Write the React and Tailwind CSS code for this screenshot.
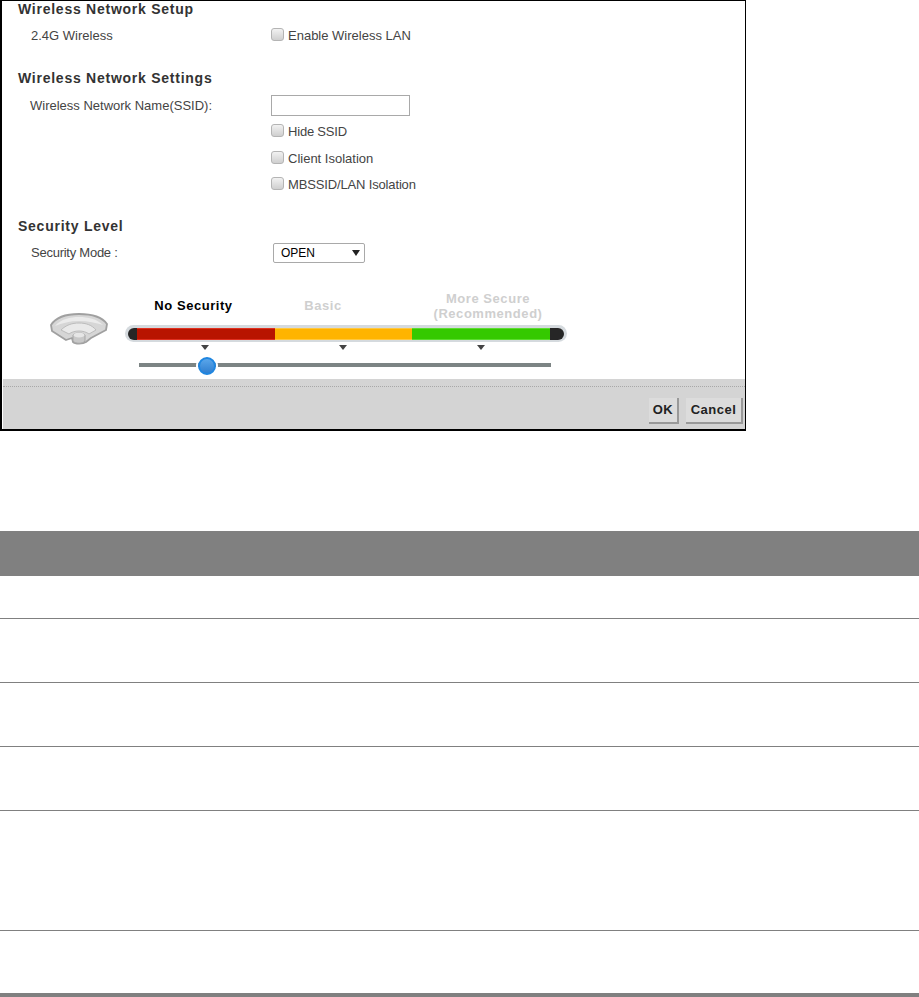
const font = "font-['Liberation_Sans',Arial,sans-serif]";

function Heading({ children, className = '' }) {
  return (
    <h2 className={`h-[18px] leading-[16px] text-[14px] font-bold tracking-[0.75px] text-[#333] ${className}`}>
      {children}
    </h2>
  );
}

function CheckRow({ label, className = '', labelClass = '' }) {
  return (
    <div className={`flex items-center h-[18px] ${className}`}>
      <span className="w-[13px] h-[13px] mt-[-3px] rounded-[3px] border border-[#b4b4b4] bg-gradient-to-b from-[#f2f2f2] to-[#cfcfcf]" />
      <span className={`ml-[4px] text-[13px] text-[#444] ${labelClass}`}>{label}</span>
    </div>
  );
}

function Arrow() {
  return <span className="w-0 h-0 border-x-[4px] border-x-transparent border-t-[5px] border-t-[#444]" />;
}

function WifiIcon() {
  return (
    <svg width="58" height="32" viewBox="0 0 58 32" className="block">
      <path d="M1 12 C6 4 17 1 29 1 C41 1 52 4 57 11 L56 17 L41 25 L36 29 C33 31 25 31 23 29 L22 25 L16 27 L2 18 Z" fill="#d6d6d6" stroke="#a0a0a0" strokeWidth="1.8" strokeLinejoin="round" />
      <path d="M5 13 C11 6 20 4 29 4 C38 4 47 6 53 12 C46 10 38 8 29 8 C20 8 12 10 5 13 Z" fill="#ebebeb" />
      <path d="M11 17 C16 12 22 10 29 10 C36 10 42 12 46 17 L39 21 C34 17 24 17 19 21 Z" fill="#e9e9e9" stroke="#bcbcbc" />
      <path d="M23 22 C26 19 32 19 35 22 L35 28 C33 31 25 31 23 28 Z" fill="#c8c8c8" stroke="#a6a6a6" />
      <ellipse cx="29" cy="22" rx="5.5" ry="2.5" fill="#e6e6e6" />
    </svg>
  );
}

function SecurityMeter() {
  return (
    <div className="flex">
      <div className="w-[75px] pl-[32px] pt-[25px] shrink-0 box-content">
        <WifiIcon />
      </div>
      <div className="w-[442px]">
        <div className="flex h-[37px] items-center pb-[2px] text-[13px] font-bold tracking-[0.55px] text-center leading-[15px]">
          <span className="w-[137px] shrink-0 text-black">No Security</span>
          <span className="w-[122px] shrink-0 text-[#cfcfcf]">Basic</span>
          <span className="w-[208px] shrink-0 text-[#cfcfcf]">More Secure<br />(Recommended)</span>
        </div>
        <div className="h-[17px] rounded-full bg-[#d5dade] p-[3px] pb-[2px]">
          <div className="flex h-[12px]">
            <div className="w-[9px] bg-[#262626] rounded-l-full" />
            <div className="w-[138px] bg-[#b81400] border-y border-[#e03020]" />
            <div className="w-[137px] bg-[#ffb400] border-y border-[#ffc840]" />
            <div className="w-[138px] bg-[#35c900] border-y border-[#5cdc30]" />
            <div className="w-[14px] bg-[#262626] rounded-r-full" />
          </div>
        </div>
        <div className="flex justify-between w-[284px] ml-[76px] mt-[3px] h-[5px]">
          <Arrow />
          <Arrow />
          <Arrow />
        </div>
        <div className="relative w-[412px] h-[4px] ml-[14px] mt-[13px] bg-[#7c8484]">
          <span className="absolute left-[59px] top-[-6px] w-[18px] h-[18px] rounded-full border-[2px] border-[#1f86e0] bg-gradient-to-b from-[#5aa6ea] to-[#2f7fd0] ring-2 ring-white" />
        </div>
      </div>
    </div>
  );
}

function Frame() {
  return (
    <div className="w-[746px] h-[431px] border border-black border-l-2 border-b-2 flex flex-col">
      <div className="flex-1 pl-[16px]">
        <Heading>Wireless Network Setup</Heading>
        <div className="flex mt-[8px] h-[18px] items-center">
          <span className="w-[253px] pl-[13px] text-[13px] text-[#444]">2.4G Wireless</span>
          <CheckRow label="Enable Wireless LAN" />
        </div>
        <Heading className="mt-[25px]">Wireless Network Settings</Heading>
        <div className="flex mt-[7px] items-center">
          <span className="w-[253px] pl-[12px] text-[13px] text-[#444]">Wireless Network Name(SSID):</span>
          <div className="w-[139px] h-[21px] border border-[#a9a9a9] bg-white" />
        </div>
        <div className="pl-[253px]">
          <CheckRow label="Hide SSID" className="mt-[7px]" labelClass="tracking-[-0.2px]" />
          <CheckRow label="Client Isolation" className="mt-[9px]" />
          <CheckRow label="MBSSID/LAN Isolation" className="mt-[8px]" labelClass="tracking-[-0.15px]" />
        </div>
        <Heading className="mt-[24px]">Security Level</Heading>
        <div className="flex mt-[7px] items-center">
          <span className="w-[255px] pl-[13px] text-[13px] tracking-[-0.25px] text-[#444]">Security Mode :</span>
          <div className="w-[92px] h-[20px] border border-[#a9a9a9] rounded-[2px] flex items-center justify-between pl-[7px] pr-[4px] text-[12px] text-black">
            OPEN
            <span className="w-0 h-0 border-x-[4px] border-x-transparent border-t-[6px] border-t-[#222]" />
          </div>
        </div>
        <div className="mt-[25px]">
          <SecurityMeter />
        </div>
      </div>
      <div className="h-[50px] ml-px bg-[#d4d4d4] pt-[7px]">
        <div className="border-t border-dotted border-[#a8a8a8]" />
        <div className="flex justify-end gap-[7px] pr-[2px] pt-[11px]">
          <button className="w-[30px] h-[26px] bg-[#dcdcdc] border-r-2 border-b-2 border-[#999] text-[13px] font-bold tracking-[0.5px] text-[#222]">OK</button>
          <button className="w-[57px] h-[26px] bg-[#dcdcdc] border-r-2 border-b-2 border-[#999] text-[13px] font-bold tracking-[0.5px] text-[#222]">Cancel</button>
        </div>
      </div>
    </div>
  );
}

const rowHeights = ['h-[43px]', 'h-[64px]', 'h-[64px]', 'h-[64px]', 'h-[120px]'];

export default function App() {
  return (
    <div className={`w-[919px] h-[997px] bg-white overflow-hidden ${font}`}>
      <Frame />
      <div className="mt-[100px] h-[45px] bg-[#808080]" />
      {rowHeights.map((h, i) => (
        <div key={i} className={`${h} border-b border-[#808080]`} />
      ))}
      <div className="h-[66px] border-b-4 border-[#808080]" />
    </div>
  );
}
